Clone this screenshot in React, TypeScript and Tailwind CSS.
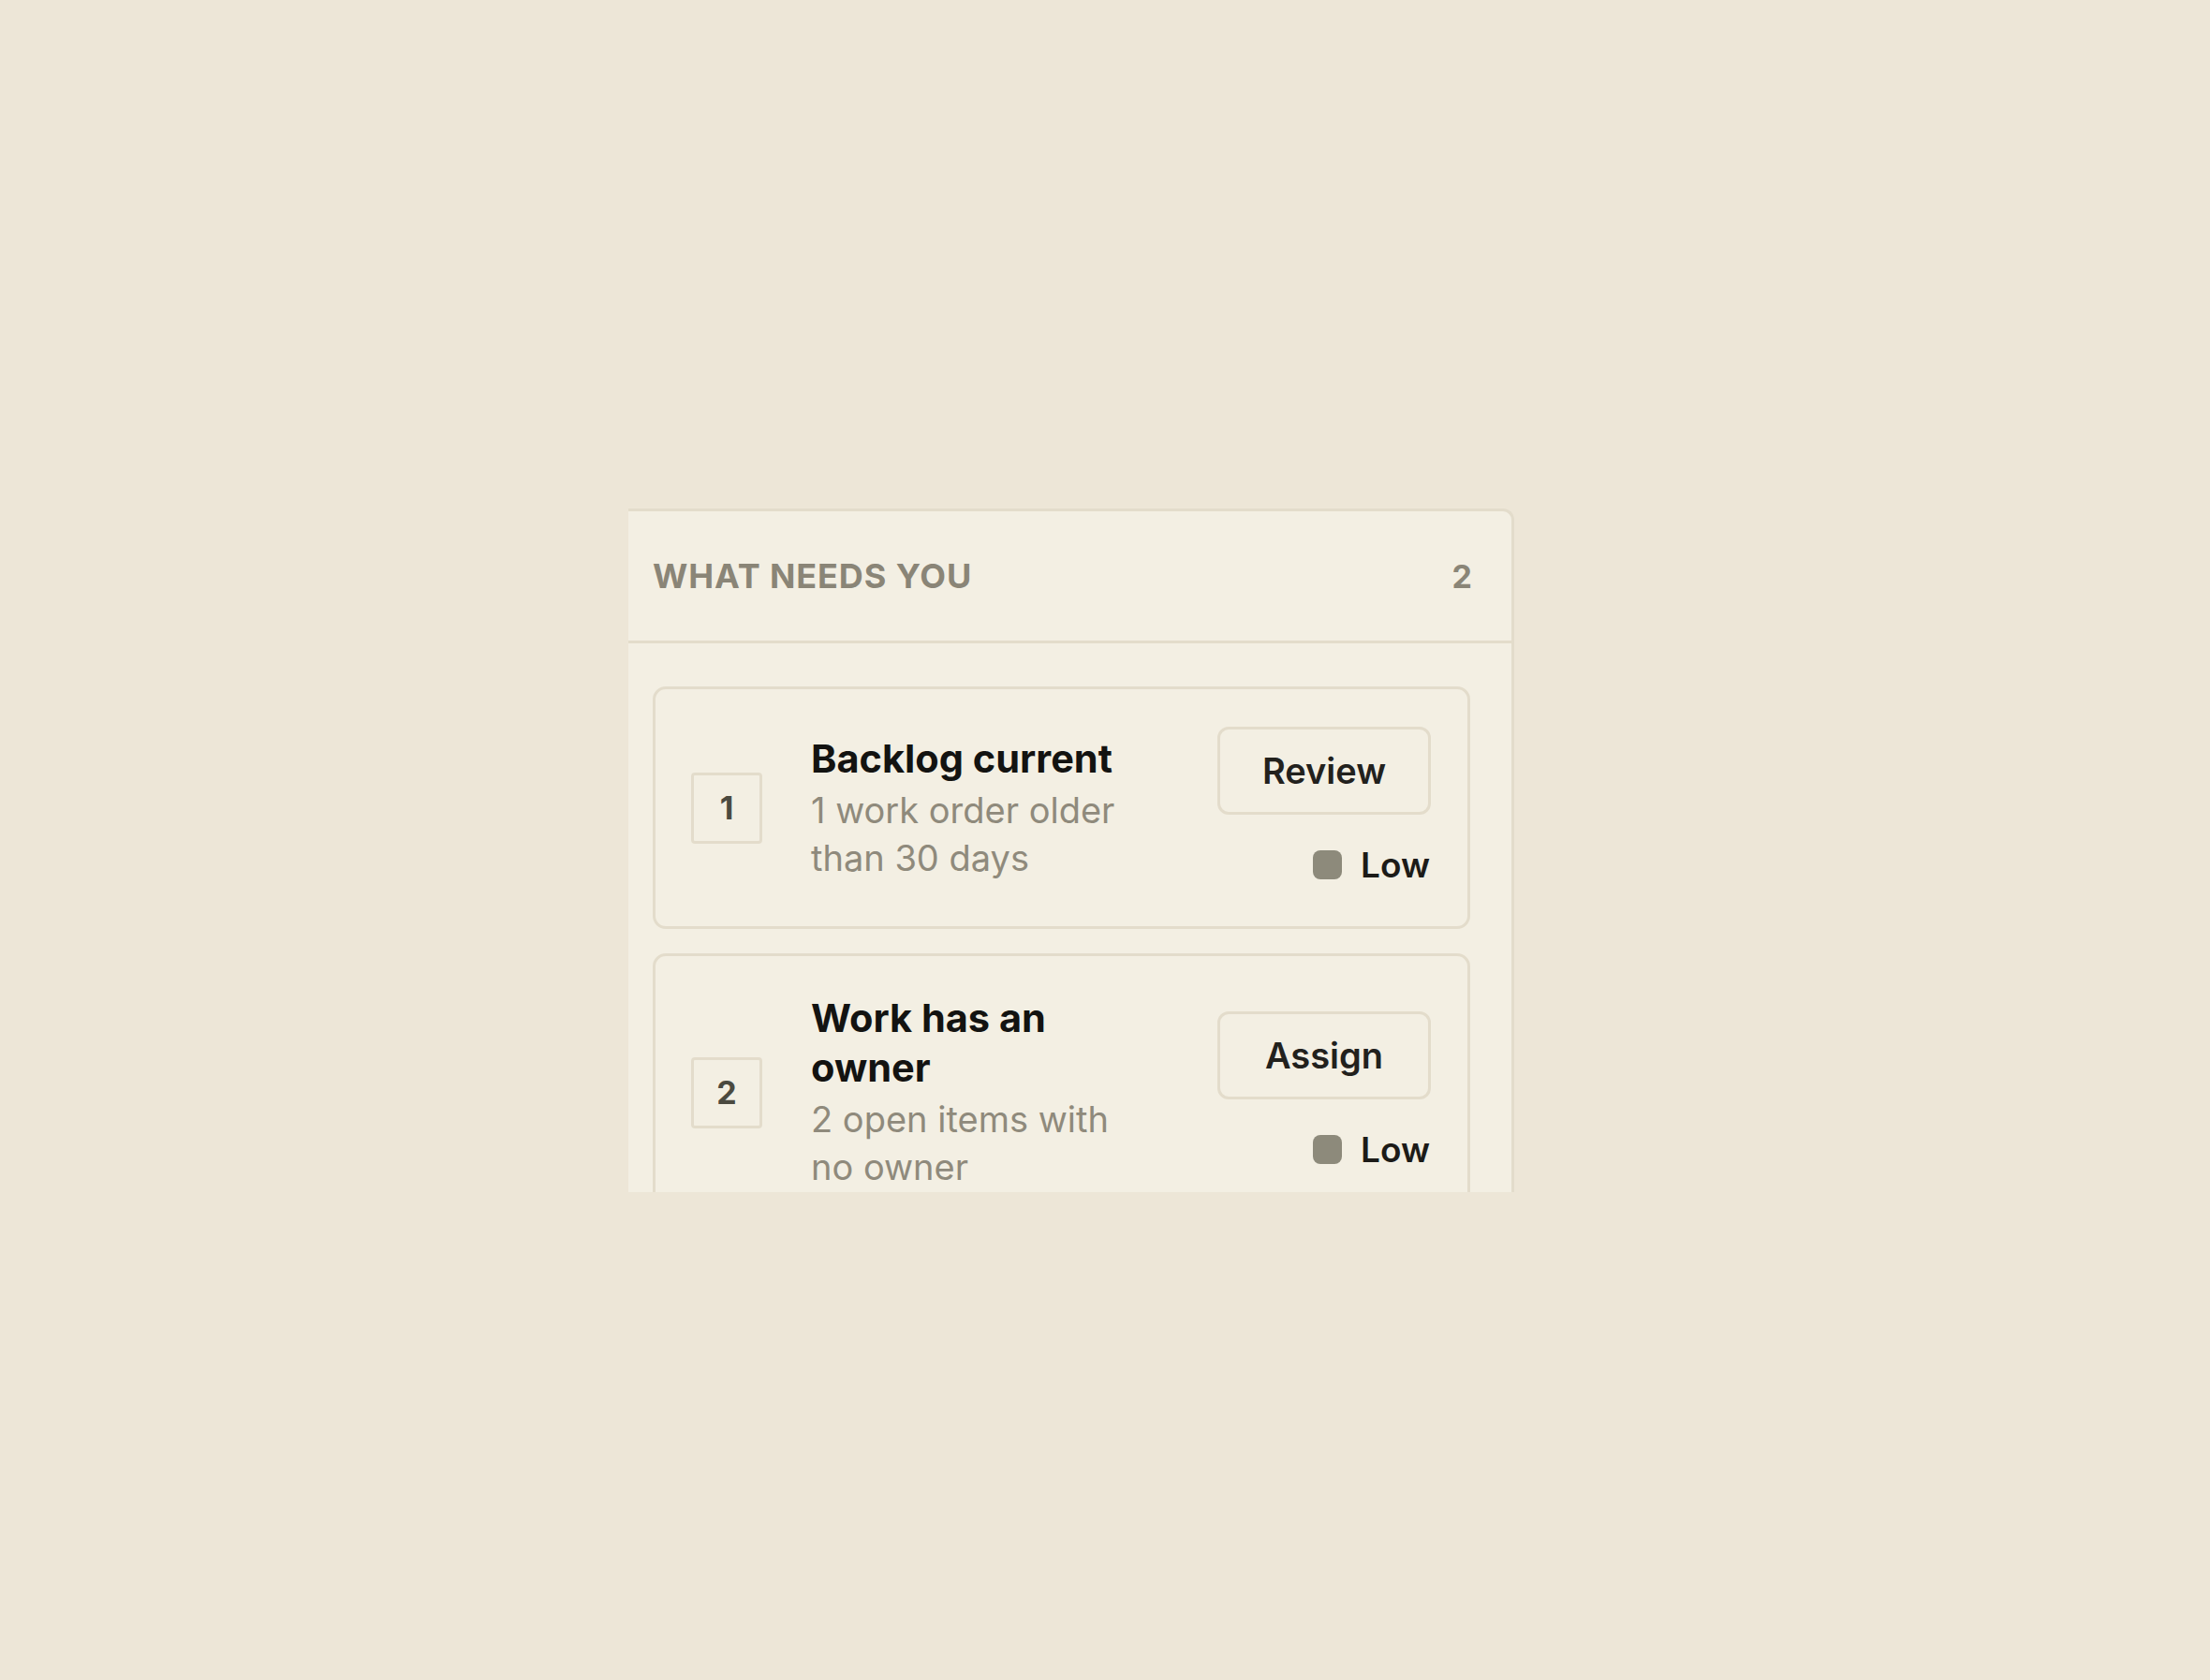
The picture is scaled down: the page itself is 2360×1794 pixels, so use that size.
import * as React from "react";

type Item = {
  rank: number;
  title: string;
  detail: string;
  action: string;
  priority: string;
};

const items: Item[] = [
  {
    rank: 1,
    title: "Backlog current",
    detail: "1 work order older than 30 days",
    action: "Review",
    priority: "Low",
  },
  {
    rank: 2,
    title: "Work has an owner",
    detail: "2 open items with no owner",
    action: "Assign",
    priority: "Low",
  },
];

export default function App() {
  return (
    <div
      className="min-h-screen w-full bg-[#ede6d7] pl-[671px] pt-[543px]"
      style={{ fontFamily: "Inter, 'Noto Sans', sans-serif" }}
    >
      <section className="h-[730px] w-[946px] overflow-hidden rounded-tr-[12px] border-t-[3px] border-r-[3px] border-[#e3dccb] bg-[#f3efe3]">
        <header className="flex h-[141px] items-center justify-between border-b-[3px] border-[#e3dccb] pl-[26px] pr-[42px]">
          <h2 className="text-[36px] font-bold uppercase tracking-[0.025em] text-[#8a8577]">
            What needs you
          </h2>
          <span className="text-[34px] font-bold text-[#8a8577]">{items.length}</span>
        </header>

        <div className="flex flex-col gap-[26px] pl-[26px] pr-[44px] pt-[46px]">
          {items.map((item) => (
            <ActionCard key={item.rank} item={item} />
          ))}
        </div>
      </section>
    </div>
  );
}

function ActionCard({ item }: { item: Item }) {
  return (
    <div className="flex items-center rounded-[14px] border-[3px] border-[#e3dccb] py-[40px] pl-[38px] pr-[39px]">
      <div className="flex h-[76px] w-[76px] shrink-0 items-center justify-center rounded-[4px] border-[3px] border-[#e3dccb] text-[34px] font-bold text-[#4b4a40]">
        {item.rank}
      </div>

      <div className="ml-[52px] w-[340px] flex-none">
        <div className="mb-[3px] text-[41.5px] font-bold leading-[53px] text-[#131311]">
          {item.title}
        </div>
        <div className="text-[38px] leading-[51px] text-[#8f8a7c]">{item.detail}</div>
      </div>

      <div className="ml-auto flex flex-col items-end gap-[28px]">
        <button className="h-[94px] w-[228px] rounded-[12px] border-[3px] border-[#e3dccb] text-[38px] font-semibold text-[#22211d]">
          {item.action}
        </button>
        <div className="flex items-center gap-[20px] pr-[1px]">
          <span className="h-[31px] w-[31px] rounded-[8px] bg-[#8d8a7b]" />
          <span className="text-[37px] font-semibold leading-[51px] text-[#1c1b18]">
            {item.priority}
          </span>
        </div>
      </div>
    </div>
  );
}
